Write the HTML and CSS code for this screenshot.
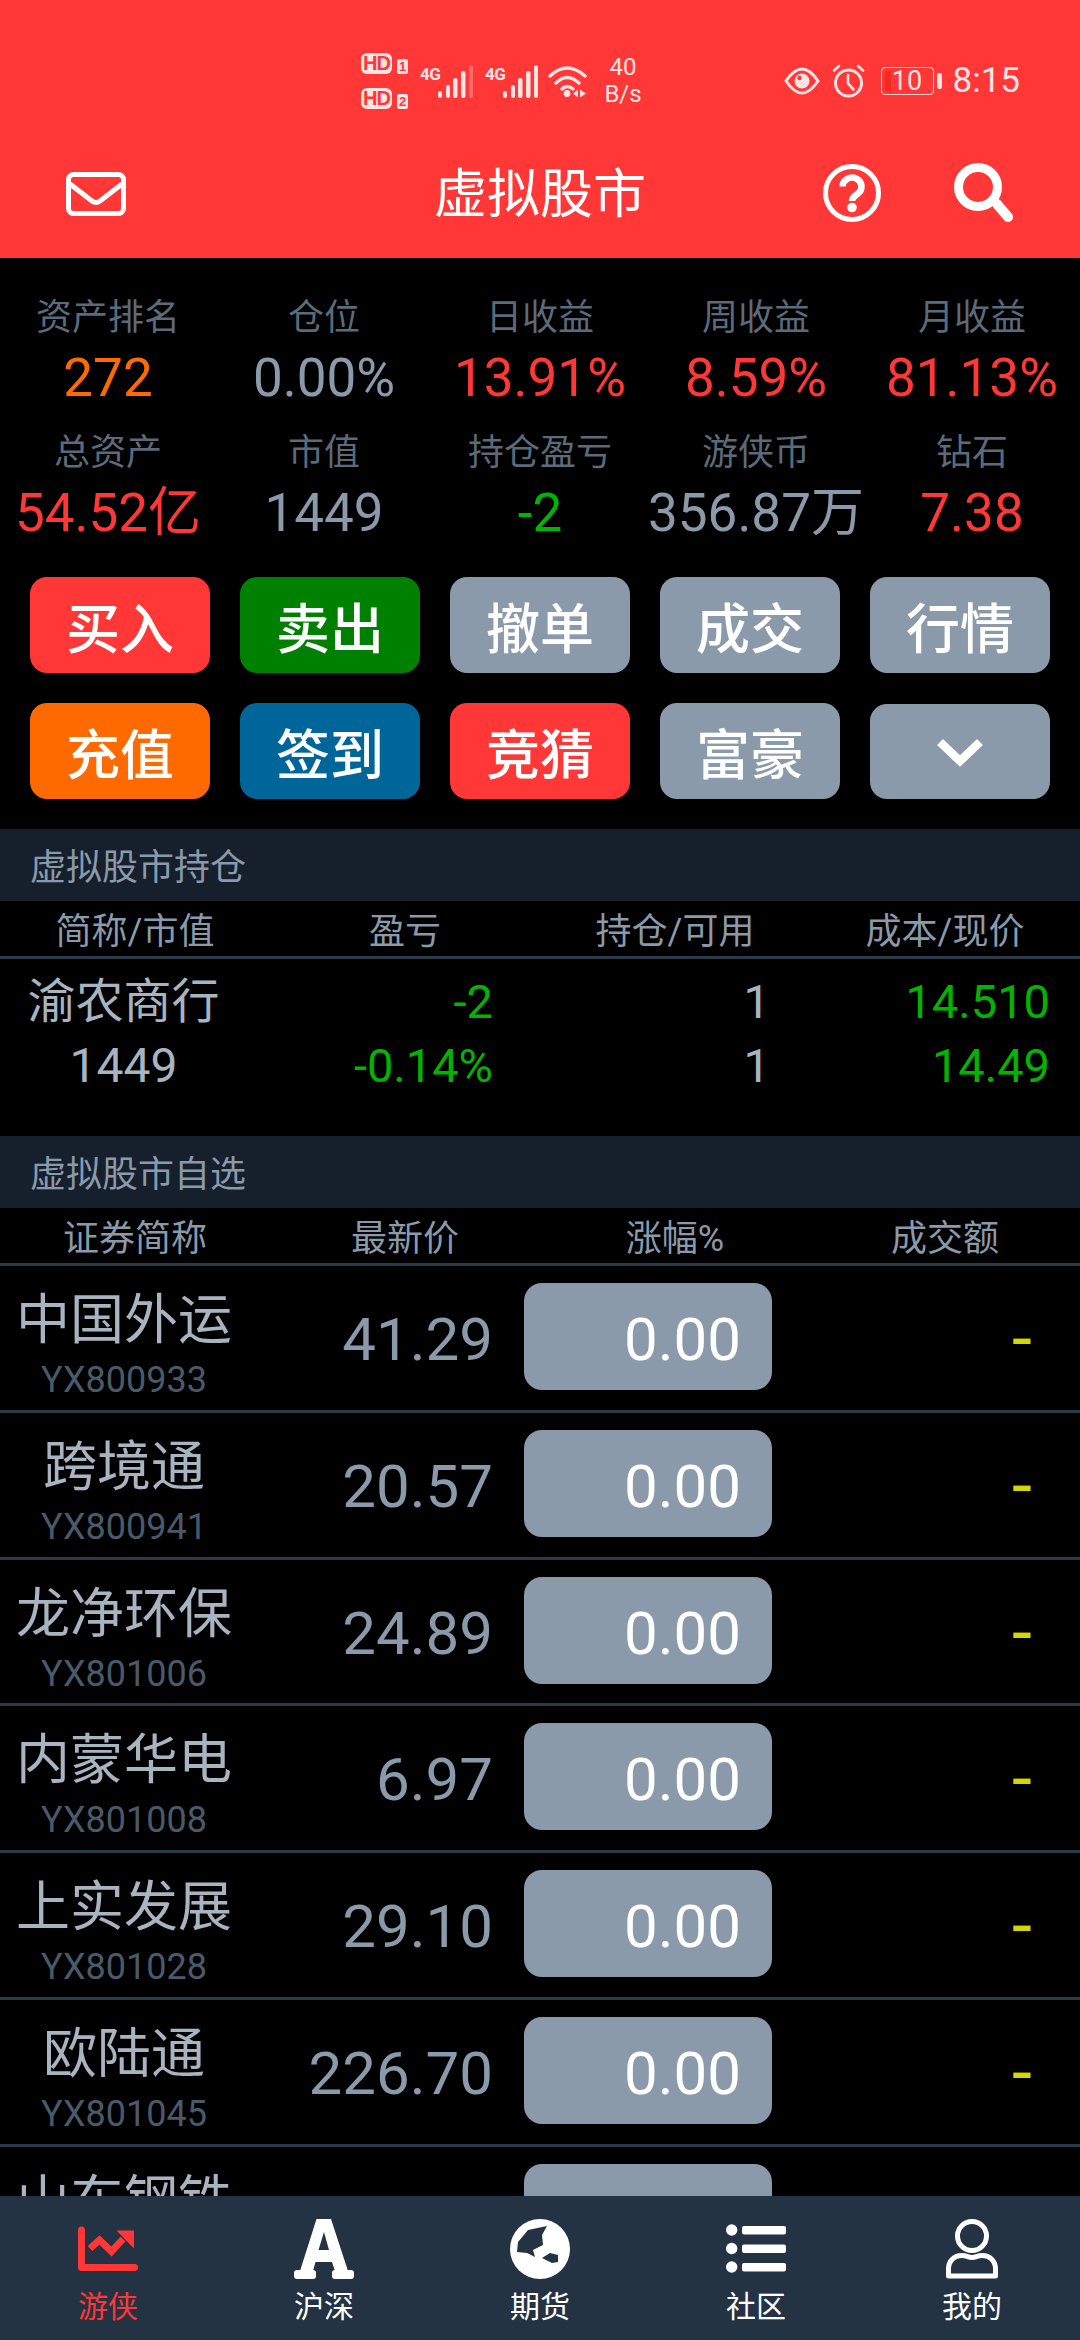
FILE: index.html
```html
<!DOCTYPE html>
<html lang="zh-CN">
<head>
<meta charset="utf-8">
<title>虚拟股市</title>
<link rel="stylesheet" href="styles.css">
</head>
<body>
<div class="app">
  <header class="top">
    <div class="status">
      <div class="hd-stack">
        <div class="hd-line"><span class="hd">HD</span><span class="sim">1</span></div>
        <div class="hd-line"><span class="hd">HD</span><span class="sim">2</span></div>
      </div>
      <svg class="signal" viewBox="0 0 53 33" width="53" height="33">
        <text x="0" y="15" class="net-text">4G</text>
        <rect x="18" y="26" width="4" height="7" rx="2"/><rect x="26" y="20" width="4" height="13" rx="2"/><rect x="33" y="13" width="4.5" height="20" rx="2"/><rect x="41" y="6" width="4.5" height="27" rx="2"/><rect x="49" y="0" width="4" height="33" rx="2" opacity=".3"/>
      </svg>
      <svg class="signal signal-b" viewBox="0 0 53 33" width="53" height="33">
        <text x="0" y="15" class="net-text">4G</text>
        <rect x="18" y="26" width="4" height="7" rx="2"/><rect x="26" y="20" width="4" height="13" rx="2"/><rect x="33" y="13" width="4.5" height="20" rx="2"/><rect x="41" y="6" width="4.5" height="27" rx="2"/><rect x="49" y="0" width="4" height="33" rx="2"/>
      </svg>
      <svg class="wifi" viewBox="0 0 40 32" width="40" height="32">
        <path d="M2 11Q19-5 37 11M8 18Q19 7 31 18M14 24Q19 19 25 24" fill="none" stroke="#ffe4e4" stroke-width="3.4" stroke-linecap="round"/>
        <circle cx="19" cy="28.500" r="3.400" fill="#ffe4e4"/>
        <path d="M25 28.500l5-4v8zM32 24.500l6 4-6 4z" fill="#ffe4e4"/>
      </svg>
      <div class="speed"><span>40</span><span>B/s</span></div>
      <div class="status-right">
        <svg viewBox="0 0 36 28" width="36" height="28">
          <path d="M2 14Q10 2 18 2T34 14Q26 26 18 26T2 14Z" fill="none" stroke="#ffe4e4" stroke-width="3"/>
          <circle cx="18" cy="14" r="7.500" fill="#ffe4e4"/><circle cx="15.500" cy="11" r="2.200" fill="#ff3737"/>
        </svg>
        <svg viewBox="0 0 33 34" width="33" height="34">
          <circle cx="16.500" cy="19" r="13" fill="none" stroke="#ffe4e4" stroke-width="3"/>
          <path d="M16 11v8.500l5.500 6M2 6.500l5-4.500M31 6.500l-5-4.500" fill="none" stroke="#ffe4e4" stroke-width="2.600" stroke-linecap="round"/>
        </svg>
        <div class="battery"><span class="charge"></span><span class="level">10</span></div>
        <span class="nub"></span>
        <span class="time">8:15</span>
      </div>
    </div>
    <nav class="navbar">
      <div class="nav-left">
        <svg viewBox="0 0 60 44" width="60" height="44">
          <rect x="2.500" y="2.500" width="55" height="39" rx="5" fill="none" stroke="#fff" stroke-width="5"/>
          <path d="M4 12L26 29Q30 32 34 29L56 12" fill="none" stroke="#fff" stroke-width="5"/>
        </svg>
      </div>
      <h1 class="title">虚拟股市</h1>
      <div class="nav-right">
        <svg viewBox="0 0 60 60" width="60" height="60">
          <circle cx="30" cy="30" r="26.500" fill="none" stroke="#fff" stroke-width="5"/>
          <path d="M20.500 23.500a9.500 9 0 1 1 15 7.500c-3.500 2.500-5.500 3.500-5.500 7" fill="none" stroke="#fff" stroke-width="6.500"/>
          <circle cx="30" cy="44.500" r="4.800" fill="#fff"/>
        </svg>
        <svg viewBox="0 0 62 62" width="62" height="62">
          <circle cx="24" cy="25" r="19.500" fill="none" stroke="#fff" stroke-width="9"/>
          <path d="M43 42L54 55" fill="none" stroke="#fff" stroke-width="10" stroke-linecap="round"/>
        </svg>
      </div>
    </nav>
  </header>

  <main class="scroll">
    <section class="stats">
      <div class="stat"><span class="stat-label">资产排名</span><span class="stat-value c-orange">272</span></div>
      <div class="stat"><span class="stat-label">仓位</span><span class="stat-value c-grey">0.00%</span></div>
      <div class="stat"><span class="stat-label">日收益</span><span class="stat-value c-red">13.91%</span></div>
      <div class="stat"><span class="stat-label">周收益</span><span class="stat-value c-red">8.59%</span></div>
      <div class="stat"><span class="stat-label">月收益</span><span class="stat-value c-red">81.13%</span></div>
      <div class="stat"><span class="stat-label">总资产</span><span class="stat-value c-red">54.52亿</span></div>
      <div class="stat"><span class="stat-label">市值</span><span class="stat-value c-grey">1449</span></div>
      <div class="stat"><span class="stat-label">持仓盈亏</span><span class="stat-value c-green">-2</span></div>
      <div class="stat"><span class="stat-label">游侠币</span><span class="stat-value c-grey">356.87万</span></div>
      <div class="stat"><span class="stat-label">钻石</span><span class="stat-value c-red">7.38</span></div>
    </section>

    <section class="actions">
      <button class="act b-red">买入</button>
      <button class="act b-green">卖出</button>
      <button class="act b-grey">撤单</button>
      <button class="act b-grey">成交</button>
      <button class="act b-grey">行情</button>
      <button class="act b-orange">充值</button>
      <button class="act b-blue">签到</button>
      <button class="act b-red">竞猜</button>
      <button class="act b-grey">富豪</button>
      <button class="act b-grey act-more" aria-label="更多">
        <svg viewBox="0 0 48 30" width="48" height="30"><path d="M4 5L24 24L44 5" fill="none" stroke="#fff" stroke-width="8.500"/></svg>
      </button>
    </section>

    <h2 class="section-title">虚拟股市持仓</h2>
    <div class="thead"><span>简称/市值</span><span>盈亏</span><span>持仓/可用</span><span>成本/现价</span></div>
    <div class="hold">
      <span class="hold-name">渝农商行</span><span class="num c-green">-2</span><span class="num c-light">1</span><span class="num c-green">14.510</span>
      <span class="hold-name">1449</span><span class="num c-green">-0.14%</span><span class="num c-light">1</span><span class="num c-green">14.49</span>
    </div>

    <h2 class="section-title">虚拟股市自选</h2>
    <div class="thead"><span>证券简称</span><span>最新价</span><span>涨幅%</span><span>成交额</span></div>

    <div class="row"><div class="who"><span class="name">中国外运</span><span class="code">YX800933</span></div><span class="price">41.29</span><span class="pct">0.00</span><span class="amt">-</span></div>
    <div class="row"><div class="who"><span class="name">跨境通</span><span class="code">YX800941</span></div><span class="price">20.57</span><span class="pct">0.00</span><span class="amt">-</span></div>
    <div class="row"><div class="who"><span class="name">龙净环保</span><span class="code">YX801006</span></div><span class="price">24.89</span><span class="pct">0.00</span><span class="amt">-</span></div>
    <div class="row"><div class="who"><span class="name">内蒙华电</span><span class="code">YX801008</span></div><span class="price">6.97</span><span class="pct">0.00</span><span class="amt">-</span></div>
    <div class="row"><div class="who"><span class="name">上实发展</span><span class="code">YX801028</span></div><span class="price">29.10</span><span class="pct">0.00</span><span class="amt">-</span></div>
    <div class="row"><div class="who"><span class="name">欧陆通</span><span class="code">YX801045</span></div><span class="price">226.70</span><span class="pct">0.00</span><span class="amt">-</span></div>
    <div class="row"><div class="who"><span class="name">山东钢铁</span></div><span class="price"></span><span class="pct"></span><span class="amt"></span></div>
  </main>

  <footer class="tabs">
    <a class="tab tab-on">
      <svg viewBox="0 0 60 60" width="60" height="60">
        <path d="M3.500 11V48.500H56.500" fill="none" stroke="#ff3737" stroke-width="7" stroke-linecap="round" stroke-linejoin="round"/>
        <path d="M12 29.500L21.500 21L33.500 32.500L45 20" fill="none" stroke="#ff3737" stroke-width="7"/>
        <path d="M38.500 11.500H56V29.500Z" fill="#ff3737"/>
      </svg>
      <span>游侠</span>
    </a>
    <a class="tab">
      <svg viewBox="0 0 60 60" width="60" height="60">
        <path fill-rule="evenodd" d="M22.500 0H37L54 52H41L38 43H21.500L19 52H6ZM30 13L24.500 31H35Z" fill="#fff"/>
        <rect x="0" y="51" width="22" height="9" rx="3" fill="#fff"/><rect x="38" y="51" width="22" height="9" rx="3" fill="#fff"/>
      </svg>
      <span>沪深</span>
    </a>
    <a class="tab">
      <svg viewBox="0 0 60 60" width="60" height="60">
        <circle cx="30" cy="30" r="30" fill="#fff"/>
        <path d="M7 33L8 23L18 11L37 7L32 16L33 26L23 31L25 38L17 34Z" fill="#233343"/>
        <path d="M32 39L40 34L48 36L48 43L42 44Z" fill="#233343"/>
      </svg>
      <span>期货</span>
    </a>
    <a class="tab">
      <svg viewBox="0 0 60 60" width="60" height="60">
        <circle cx="5.700" cy="11" r="5.700" fill="#fff"/><circle cx="5.700" cy="29.500" r="5.700" fill="#fff"/><circle cx="5.700" cy="48" r="5.700" fill="#fff"/>
        <rect x="16" y="7" width="44" height="8.500" rx="2" fill="#fff"/><rect x="16" y="25.500" width="44" height="8.500" rx="2" fill="#fff"/><rect x="16" y="44" width="44" height="8.500" rx="2" fill="#fff"/>
      </svg>
      <span>社区</span>
    </a>
    <a class="tab">
      <svg viewBox="0 0 60 60" width="60" height="60">
        <circle cx="30" cy="17" r="14.500" fill="none" stroke="#fff" stroke-width="5"/>
        <path d="M6.500 57V50C6.500 42 12 36.500 20 36.500C25 36.500 26 38.500 30 38.500C34 38.500 35 36.500 40 36.500C48 36.500 53.500 42 53.500 50V57Z" fill="none" stroke="#fff" stroke-width="5" stroke-linejoin="round"/>
      </svg>
      <span>我的</span>
    </a>
  </footer>
</div>
</body>
</html>
```

FILE: styles.css
```css
* { box-sizing: border-box; margin: 0; padding: 0; }
html, body { width: 1080px; height: 2340px; background: #000; overflow: hidden; }
body { font-family: Roboto, "Noto Sans CJK SC", sans-serif; }
.app { width: 1080px; height: 2340px; display: flex; flex-direction: column; overflow: hidden; }

.top { height: 258px; background: #ff3737; color: #fff; flex: none; }
.status { height: 130px; padding: 32px 60px 0 361px; display: flex; align-items: center; color: #ffe4e4; }
.hd-stack { display: flex; flex-direction: column; gap: 14px; width: 59px; }
.hd-line { display: flex; align-items: flex-end; gap: 5px; }
.hd { width: 31px; height: 21px; border-radius: 6px; background: #ffe4e4; color: #ff3737; font: 700 20px/21px "Liberation Sans", sans-serif; text-align: center; letter-spacing: -1px; }
.sim { width: 11px; height: 15px; border-radius: 2px; background: #ffe4e4; color: #ff3737; font: 700 13px/15px "Liberation Sans", sans-serif; text-align: center; }
.signal { fill: #ffe4e4; flex: none; }
.signal-b { margin-left: 12px; }
.net-text { font: 700 17px Roboto, sans-serif; fill: #ffe4e4; letter-spacing: -.5px; }
.wifi { margin-left: 10px; flex: none; }
.speed { width: 52px; margin-left: 9px; display: flex; flex-direction: column; align-items: center; font-size: 24px; line-height: 27px; }
.status-right { margin-left: auto; display: flex; align-items: center; }
.status-right svg + svg { margin-left: 12px; }
.battery { margin-left: 16px; width: 53px; height: 28px; border: 1.500px solid #ffd0d0; border-radius: 4px; position: relative; display: flex; align-items: center; justify-content: center; }
.charge { position: absolute; left: 3px; top: 3px; bottom: 3px; width: 6px; background: #f22a1f; }
.level { position: relative; font-size: 27px; line-height: 26px; color: #ffe4e4; }
.nub { width: 5px; height: 16px; border-radius: 2px; background: #ffe4e4; margin-left: 3px; }
.time { margin-left: 11px; font-size: 35px; line-height: 40px; color: #ffe4e4; }

.navbar { height: 128px; display: grid; grid-template-columns: 1fr auto 1fr; align-items: center; }
.nav-left { padding-left: 66px; display: flex; align-items: center; }
.title { font-size: 53px; font-weight: 400; line-height: 70px; padding-top: 2px; }
.nav-right { display: flex; justify-content: flex-end; align-items: center; gap: 72px; padding-right: 64px; margin-top: -2px; }

.scroll { flex: 1; min-height: 0; overflow: hidden; }
.stats { display: grid; grid-template-columns: repeat(5, 216px); row-gap: 15px; padding: 35px 0 29px; }
.stat { display: flex; flex-direction: column; align-items: center; white-space: nowrap; }
.stat-label { font-size: 36px; line-height: 50px; color: #5c6b7a; }
.stat-value { font-size: 53px; line-height: 70px; }
.c-orange { color: #ff6a00; }
.c-grey { color: #8a9aaa; }
.c-red { color: #ff3737; }
.c-green { color: #00b400; }
.c-light { color: #a8b4c0; }

.actions { display: grid; grid-template-columns: repeat(5, 180px); gap: 30px; padding: 0 30px 30px; }
.act { height: 96px; border: 0; border-radius: 17px; color: #fff; font-family: inherit; font-size: 54px; font-weight: 500; display: flex; align-items: center; justify-content: center; }
.act-more { height: 95px; margin-top: 1px; }
.b-red { background: #ff3737; }
.b-green { background: #008000; }
.b-grey { background: #8a9aaa; }
.b-orange { background: #ff6a00; }
.b-blue { background: #006699; }

.section-title { height: 72px; background: #16202c; padding: 3px 0 0 30px; font-size: 36px; font-weight: 400; line-height: 72px; color: #8a9aaa; }
.thead { height: 58px; display: grid; grid-template-columns: repeat(4, 270px); align-items: center; text-align: center; border-bottom: 3px solid #2b3a4a; font-size: 36px; color: #8a9aaa; padding-bottom: 2px; }

.hold { height: 177px; padding-top: 11px; display: grid; grid-template-columns: 247px 246px 277px 280px; grid-auto-rows: 64px; align-items: center; }
.hold-name { font-size: 48px; line-height: 64px; color: #a8b4c0; text-align: center; white-space: nowrap; }
.num { font-size: 47px; line-height: 64px; text-align: right; }

.row { height: 146.800px; display: grid; grid-template-columns: 248px 276px 248px 1fr; border-bottom: 3px solid #2b3a4a; padding-top: 17px; align-items: start; }
.who { display: flex; flex-direction: column; align-items: center; padding-top: 8px; white-space: nowrap; }
.name { font-size: 54px; line-height: 60px; color: #a8b4c0; }
.code { font-size: 36px; line-height: 58px; color: #4a5a6a; }
.price { height: 107px; padding: 3px 31px 0 0; text-align: right; font-size: 60px; line-height: 107px; color: #8a9aaa; }
.pct { height: 107px; padding: 3px 31px 0 0; border-radius: 18px; background: #8a9aaa; color: #fff; text-align: right; font-size: 60px; line-height: 107px; }
.amt { height: 107px; padding: 2px 48px 0 0; text-align: right; font-size: 72px; line-height: 107px; color: #d6d600; }

.tabs { height: 144px; flex: none; background: #233343; display: grid; grid-template-columns: repeat(5, 216px); padding-top: 23px; }
.tab { display: flex; flex-direction: column; align-items: center; gap: 8px; color: #fff; font-size: 30px; line-height: 40px; }
.tab-on { color: #ff3737; }
```
